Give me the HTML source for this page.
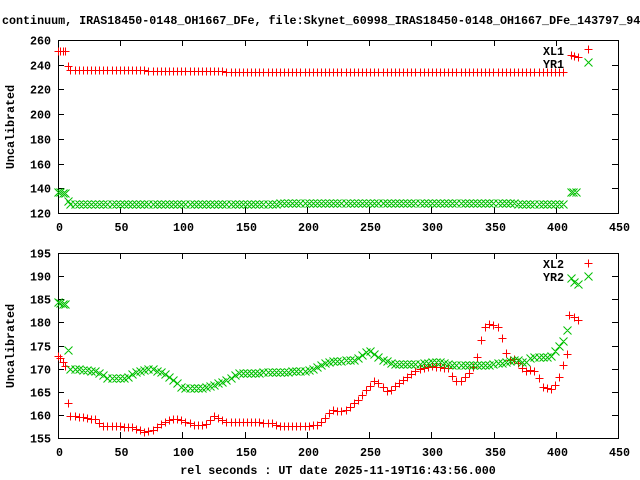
<!DOCTYPE html>
<html><head><meta charset="utf-8"><style>
html,body{margin:0;padding:0;background:#fff;width:640px;height:480px;overflow:hidden}
svg text{font-family:"Liberation Mono","DejaVu Sans Mono",monospace;font-weight:bold;font-size:11.7px;fill:#000}
</style></head><body>
<svg id="s" width="640" height="480" viewBox="0 0 640 480" xmlns="http://www.w3.org/2000/svg">
<text x="2" y="24">continuum, IRAS18450-0148_OH1667_DFe, file:Skynet_60998_IRAS18450-0148_OH1667_DFe_143797_943.cyb.fits</text>
<text x="338" y="474" text-anchor="middle">rel seconds : UT date 2025-11-19T16:43:56.000</text>
<text transform="translate(14,127) rotate(-90)" text-anchor="middle">Uncalibrated</text>
<text transform="translate(14,346) rotate(-90)" text-anchor="middle">Uncalibrated</text>
<g id="g"></g>
</svg>
<script>
var g=document.getElementById('g'),NS='http://www.w3.org/2000/svg';
function el(t,a,txt){var e=document.createElementNS(NS,t);for(var k in a)e.setAttribute(k,a[k]);if(txt!==undefined)e.textContent=txt;g.appendChild(e);return e;}
var X0=58,X1=618;function px(t){return X0+t*(X1-X0)/450;}
function frame(top,bot,vmin,vmax,step){
 el('rect',{x:X0+.5,y:top+.5,width:X1-X0,height:bot-top,fill:'none',stroke:'#000','stroke-width':1});
 var d='';
 for(var v=vmin;v<=vmax+1e-9;v+=step){var y=Math.round(bot-(v-vmin)*(bot-top)/(vmax-vmin))+.5;
  d+='M'+(X0)+' '+y+'h6M'+X1+' '+y+'h-6';
  el('text',{x:51,y:y+4,'text-anchor':'end'},String(v));}
 for(var t=0;t<=450;t+=50){var x=Math.round(px(t))+.5;d+='M'+x+' '+bot+'v-6M'+x+' '+top+'v6';
  el('text',{x:x+1,y:bot+18,'text-anchor':'middle'},String(t));}
 el('path',{d:d,stroke:'#000',fill:'none'});
}
frame(40,213,120,260,20);
frame(253,438,155,195,5);
function interp(k,t){for(var i=0;i<k.length-1;i++){if(t>=k[i][0]&&t<=k[i+1][0]){var f=(t-k[i][0])/(k[i+1][0]-k[i][0]||1);return k[i][1]+f*(k[i+1][1]-k[i][1]);}}return k[k.length-1][1];}
function series(pts,top,bot,vmin,vmax,type,col){
 var d='';pts.forEach(function(p){var x=px(p[0]),y=bot-(p[1]-vmin)*(bot-top)/(vmax-vmin);x=Math.round(x)+.5;y=Math.round(y)+.5;
  if(type=='+')d+='M'+(x-4)+' '+y+'h8M'+x+' '+(y-4)+'v8';else d+='M'+(x-4)+' '+(y-4)+'l8 8M'+(x-4)+' '+(y+4)+'l8 -8';});
 el('path',{d:d,stroke:col,fill:'none','stroke-width':1});
}
function gen(k,extraStart,extraEnd){var p=extraStart.slice();for(var t=10;t<=408;t+=3.3)p.push([t,interp(k,t)]);return p.concat(extraEnd);}
var R='#ff0000',G='#00c000';
// top
series(gen([[10,236],[100,235],[170,234],[300,234],[408,234]],[[0,251],[2,251],[4,251],[6,251],[8,239]],[[412,247.5],[415,247],[418,246]]),40,213,120,260,'+',R);
series(gen([[10,127],[120,127],[200,128],[300,128],[408,127.5]],[[0,137],[2,137],[4,136],[6,136],[8,130]],[[412,137],[414,137],[416,137]]),40,213,120,260,'x',G);
// bottom
var rk=[[10,159.8],[20,159.5],[30,159],[35,157.7],[50,157.5],[60,157.3],[70,156.3],[75,156.5],[85,158.5],[95,159.2],[100,158.8],[110,157.8],[118,157.7],[125,159.8],[135,158.5],[150,158.5],[170,158.3],[180,157.5],[200,157.5],[210,158],[220,161],[230,160.8],[240,163],[250,166],[255,167.5],[265,165],[275,167],[290,170],[300,170.5],[315,170],[318,167.6],[323,167.2],[327,168.3],[331,169.4],[335,171],[338,173.7],[340,176.2],[342,178.4],[345,179.7],[353,179.1],[355,178.3],[357,176],[360,173.1],[362,171.9],[367,172.1],[372,170.4],[376,169.5],[380,169.8],[384,169.3],[386,168.2],[388,166.8],[390,165.9],[397,165.6],[400,166.8],[403,168.4],[405,170.4],[408,171.8]];
series(gen(rk,[[0,172.7],[2,172.3],[4,171.5],[6,170.5],[8,162.5]],[[409,173.1],[411,181.5],[415,181.1],[418,180.6]]),253,438,155,195,'+',R);
var gk=[[10,170],[30,169.5],[40,168],[55,168],[60,169],[75,170],[85,169],[95,167],[100,165.8],[115,165.8],[125,166.5],[135,167.5],[145,169],[200,169.5],[218,171.5],[240,172],[250,174],[260,172],[270,171],[290,171],[305,171.5],[317,170.7],[345,170.7],[357,171.3],[371,172],[375,171],[380,172.5],[395,172.5],[398,173.3],[403,175],[407,176.4],[408,177.5]];
series(gen(gk,[[0,184.5],[2,184.2],[4,184],[6,184],[8,174]],[[409,178.4],[412,189.7],[415,188.8],[418,188.4]]),253,438,155,195,'x',G);
// legends
el('text',{x:564,y:55,'text-anchor':'end'},'XL1');el('text',{x:564,y:68,'text-anchor':'end'},'YR1');
el('text',{x:564,y:268,'text-anchor':'end'},'XL2');el('text',{x:564,y:281,'text-anchor':'end'},'YR2');
el('path',{d:'M584.5 49.5h8M588.5 45.5v8M584.5 297.5h0',stroke:R,fill:'none'});
el('path',{d:'M584.5 58.5l8 8M584.5 66.5l8 -8',stroke:G,fill:'none'});
el('path',{d:'M584.5 263.5h8M588.5 259.5v8',stroke:R,fill:'none'});
el('path',{d:'M584.5 272.5l8 8M584.5 280.5l8 -8',stroke:G,fill:'none'});
</script>
</body></html>
